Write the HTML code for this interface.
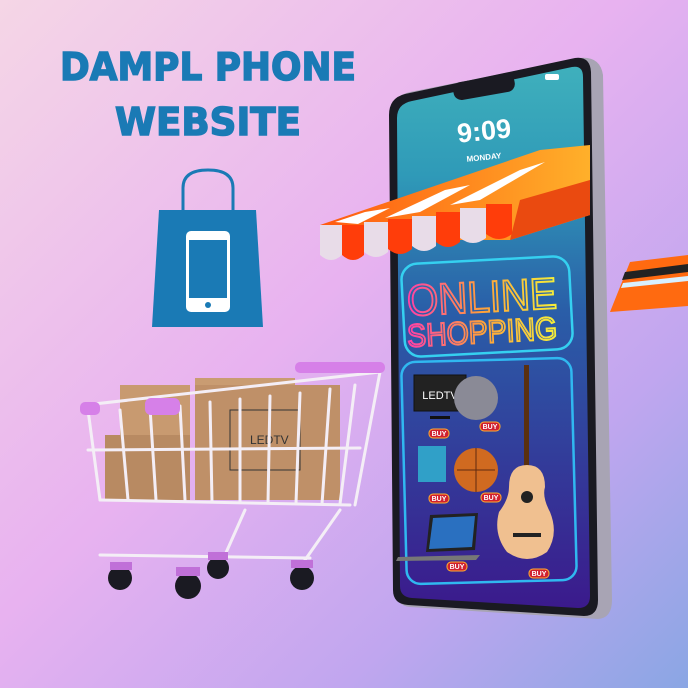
<!DOCTYPE html>
<html><head><meta charset="utf-8"><style>
html,body{margin:0;padding:0;width:688px;height:688px;overflow:hidden}
svg{display:block}
</style></head><body>
<svg width="688" height="688" viewBox="0 0 688 688" xmlns="http://www.w3.org/2000/svg">
<defs>
<linearGradient id="bg" x1="0" y1="0" x2="1" y2="1">
<stop offset="0" stop-color="#f5d6e6"/>
<stop offset="0.45" stop-color="#e8b2f0"/>
<stop offset="0.75" stop-color="#c0a6ef"/>
<stop offset="1" stop-color="#8aa6e4"/>
</linearGradient>
<linearGradient id="scr" x1="0" y1="0" x2="0" y2="1">
<stop offset="0" stop-color="#3fb0bc"/>
<stop offset="0.2" stop-color="#2f9ab8"/>
<stop offset="0.45" stop-color="#2a5ea8"/>
<stop offset="1" stop-color="#3b1a8c"/>
</linearGradient>
<linearGradient id="neon" x1="0" y1="0" x2="1" y2="0">
<stop offset="0" stop-color="#ff3fa8"/>
<stop offset="0.5" stop-color="#ffa03a"/>
<stop offset="1" stop-color="#f4ef3a"/>
</linearGradient>
<linearGradient id="awn" x1="0" y1="0" x2="1" y2="0">
<stop offset="0" stop-color="#ff5a10"/>
<stop offset="1" stop-color="#ffb02a"/>
</linearGradient>
</defs>
<rect width="688" height="688" fill="url(#bg)"/>

<!-- title -->
<text x="208" y="80" text-anchor="middle" font-family="DejaVu Sans, sans-serif" font-weight="bold" font-size="38" fill="#1a7ab5" stroke="#1a7ab5" stroke-width="1.5" textLength="296" lengthAdjust="spacingAndGlyphs">DAMPL PHONE</text>
<text x="208" y="135" text-anchor="middle" font-family="DejaVu Sans, sans-serif" font-weight="bold" font-size="38" fill="#1a7ab5" stroke="#1a7ab5" stroke-width="1.5" textLength="186" lengthAdjust="spacingAndGlyphs">WEBSITE</text>

<!-- bag -->
<path d="M183 210 V188 Q183 170 208 170 Q233 170 233 188 V210" fill="none" stroke="#1a7ab5" stroke-width="3"/>
<polygon points="159,210 256,210 263,327 152,327" fill="#1a7ab5"/>
<rect x="186" y="231" width="44" height="81" rx="5" fill="#fff"/>
<rect x="189" y="240" width="38" height="58" fill="#1a7ab5"/>
<circle cx="208" cy="305" r="3" fill="#1a7ab5"/>

<!-- credit card -->
<polygon points="630,262 688,255 688,306 610,312" fill="#ff6a10"/>
<polygon points="625,272 688,264 688,272 622,280" fill="#222"/>
<polygon points="623,283 688,276 688,281 621,288" fill="#d8f0ff"/>

<!-- phone -->
<path d="M410 92 L580 58 Q600 56 603 75 L612 600 Q612 618 598 619 L410 607 Q396 606 396 590 L392 112 Q392 96 410 92Z" fill="#a8a4b4"/>
<path d="M405 94 L575 58 Q590 56 591 72 L598 600 Q598 616 584 616 L408 605 Q393 604 393 590 L389 115 Q389 98 405 94Z" fill="#1a1a22"/>
<path d="M412 101 L572 67 Q583 65 583 77 L590 596 Q590 608 578 608 L412 598 Q400 597 400 586 L397 118 Q397 104 412 101Z" fill="url(#scr)"/>
<rect x="453" y="78" width="62" height="18" rx="8" fill="#1a1a22" transform="rotate(-10 484 87)"/>
<text x="484" y="140" text-anchor="middle" font-family="Liberation Sans, sans-serif" font-weight="bold" font-size="27" fill="#fff" transform="rotate(-6 484 130)">9:09</text>
<text x="484" y="160" text-anchor="middle" font-family="Liberation Sans, sans-serif" font-weight="bold" font-size="8" fill="#fff" transform="rotate(-6 484 158)">MONDAY</text>
<rect x="545" y="74" width="14" height="6" rx="2" fill="#fff"/>

<!-- awning -->
<polygon points="320,225 540,150 590,145 590,215 510,240 320,240" fill="url(#awn)"/>
<polygon points="335,222 365,212 390,208 358,224" fill="#fff"/>
<polygon points="385,218 445,190 470,185 420,212" fill="#fff"/>
<polygon points="450,205 520,170 545,162 480,200" fill="#fff"/>
<polygon points="510,240 590,215 590,180 520,200" fill="#ea4a10"/>
<path d="M320 225 h22 v30 q-11 10 -22 0z" fill="#e8dce8"/>
<path d="M342 225 h22 v30 q-11 10 -22 0z" fill="#ff3d0a"/>
<path d="M364 222 h24 v30 q-12 10 -24 0z" fill="#e8dce8"/>
<path d="M388 219 h24 v30 q-12 10 -24 0z" fill="#ff3d0a"/>
<path d="M412 216 h24 v30 q-12 10 -24 0z" fill="#e8dce8"/>
<path d="M436 212 h24 v30 q-12 10 -24 0z" fill="#ff3d0a"/>
<path d="M460 208 h26 v30 q-13 10 -26 0z" fill="#e8dce8"/>
<path d="M486 204 h26 v30 q-13 10 -26 0z" fill="#ff3d0a"/>

<!-- online shopping sign -->
<rect x="403" y="260" width="168" height="93" rx="16" fill="none" stroke="#35d0f0" stroke-width="2.5" transform="rotate(-3 487 306)"/>
<text x="482" y="312" text-anchor="middle" font-family="Liberation Sans, sans-serif" font-size="44" fill="none" stroke="url(#neon)" stroke-width="2" textLength="150" lengthAdjust="spacingAndGlyphs" transform="rotate(-3 482 300)">ONLINE</text>
<text x="482" y="343" text-anchor="middle" font-family="Liberation Sans, sans-serif" font-size="32" fill="none" stroke="url(#neon)" stroke-width="2" textLength="150" lengthAdjust="spacingAndGlyphs" transform="rotate(-3 482 330)">SHOPPING</text>

<!-- products panel -->
<rect x="404" y="360" width="170" height="222" rx="14" fill="none" stroke="#30b8f0" stroke-width="2.5" transform="rotate(-1.5 489 471)"/>
<rect x="414" y="375" width="52" height="36" fill="#222" stroke="#111"/>
<text x="440" y="399" text-anchor="middle" font-family="Liberation Sans, sans-serif" font-size="11" fill="#fff">LEDTV</text>
<rect x="430" y="416" width="20" height="3" fill="#111"/>
<circle cx="476" cy="398" r="22" fill="#8a8a96"/>
<rect x="418" y="446" width="28" height="36" fill="#30a0c8"/>
<circle cx="476" cy="470" r="22" fill="#d06a20"/>
<path d="M457 470 h38 M476 448 v44" stroke="#602a10" stroke-width="1"/>
<polygon points="430,515 478,513 475,550 426,552" fill="#222"/>
<polygon points="433,518 475,516 472,547 429,549" fill="#2a70c0"/>
<polygon points="398,557 480,555 476,560 396,561" fill="#777"/>
<rect x="524" y="365" width="5" height="115" fill="#5a3010"/>
<path d="M527 465 q-18 0 -18 22 q0 12 -10 25 q-6 22 8 40 q20 14 40 0 q12 -18 3 -40 q-8 -15 -5 -25 q0 -22 -18 -22z" fill="#f0c090"/>
<circle cx="527" cy="497" r="6" fill="#222"/>
<rect x="513" y="533" width="28" height="4" fill="#222"/>
<g font-family="Liberation Sans, sans-serif" font-weight="bold" font-size="7" fill="#fff" text-anchor="middle">
<rect x="429" y="429" width="20" height="9" rx="4" fill="#d02030" stroke="#ffb030"/><text x="439" y="436">BUY</text>
<rect x="480" y="422" width="20" height="9" rx="4" fill="#d02030" stroke="#ffb030"/><text x="490" y="429">BUY</text>
<rect x="429" y="494" width="20" height="9" rx="4" fill="#d02030" stroke="#ffb030"/><text x="439" y="501">BUY</text>
<rect x="481" y="493" width="20" height="9" rx="4" fill="#d02030" stroke="#ffb030"/><text x="491" y="500">BUY</text>
<rect x="447" y="562" width="20" height="9" rx="4" fill="#d02030" stroke="#ffb030"/><text x="457" y="569">BUY</text>
<rect x="529" y="569" width="20" height="9" rx="4" fill="#d02030" stroke="#ffb030"/><text x="539" y="576">BUY</text>
</g>

<!-- cart boxes -->
<rect x="120" y="385" width="70" height="115" fill="#c89a70"/>
<rect x="105" y="435" width="85" height="65" fill="#b88a62"/>
<rect x="195" y="378" width="100" height="122" fill="#c99c72"/>
<rect x="195" y="385" width="145" height="115" fill="#bf9068"/>
<rect x="230" y="410" width="70" height="60" fill="none" stroke="#333" stroke-width="1"/>
<text x="250" y="444" font-family="Liberation Sans, sans-serif" font-size="12" fill="#333">LEDTV</text>
<!-- cart wires -->
<g stroke="#f4eef6" stroke-width="3" fill="none" stroke-linecap="round">
<path d="M85 405 L380 372"/>
<path d="M88 450 L360 448"/>
<path d="M100 500 L350 505"/>
<path d="M380 372 L355 505"/>
<path d="M88 410 L100 500"/>
<path d="M120 410 L128 500 M150 408 L156 500 M180 406 L185 500 M210 402 L212 502 M240 399 L240 502 M270 396 L268 503 M300 393 L296 503 M330 389 L322 504 M355 385 L340 504"/>
<path d="M245 510 L225 555 M340 510 L305 560"/>
<path d="M100 555 L310 558"/>
<path d="M300 366 L380 365"/>
</g>
<rect x="295" y="362" width="90" height="11" rx="5" fill="#d680e8"/>
<rect x="80" y="402" width="20" height="13" rx="5" fill="#d680e8"/>
<rect x="145" y="398" width="35" height="17" rx="6" fill="#d680e8"/>
<g fill="#1a1a22">
<circle cx="120" cy="578" r="12"/><circle cx="188" cy="586" r="13"/><circle cx="218" cy="568" r="11"/><circle cx="302" cy="578" r="12"/>
</g>
<g fill="#c070d8">
<rect x="110" y="562" width="22" height="8"/><rect x="176" y="567" width="24" height="9"/><rect x="208" y="552" width="20" height="8"/><rect x="291" y="560" width="22" height="8"/>
</g>
</svg>
</body></html>
